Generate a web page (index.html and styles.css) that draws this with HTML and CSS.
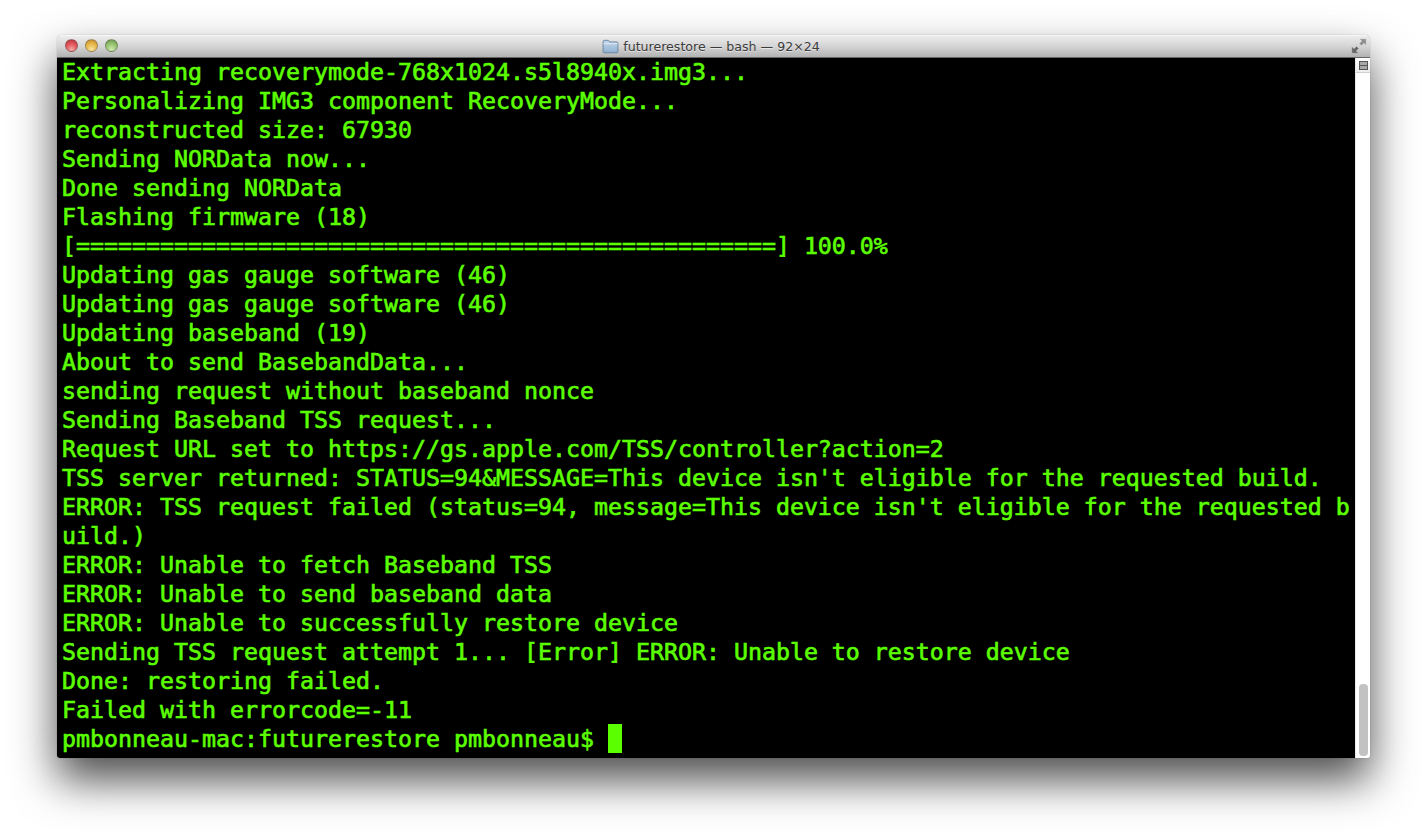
FILE: index.html
```html
<!DOCTYPE html>
<html lang="en">
<head>
<meta charset="utf-8">
<title>futurerestore — bash — 92×24</title>
<link rel="stylesheet" href="styles.css">
</head>
<body>
<main class="window">
  <header class="titlebar">
    <div class="lights">
      <span class="light red"></span>
      <span class="light yellow"></span>
      <span class="light green"></span>
    </div>
    <div class="title">
      <svg class="folder" width="17" height="15" viewBox="0 0 16 14" aria-hidden="true">
        <defs>
          <linearGradient id="fg" x1="0" y1="0" x2="0" y2="1">
            <stop offset="0" stop-color="#c4d8ea"/>
            <stop offset="1" stop-color="#8fb0d0"/>
          </linearGradient>
        </defs>
        <path d="M1 2.5C1 1.7 1.5 1.2 2.2 1.2H6l1.3 1.5H14c.6 0 1 .4 1 1v8.2c0 .6-.4 1-1 1H2c-.6 0-1-.4-1-1z" fill="url(#fg)" stroke="#5f7c9a" stroke-width=".8"/>
        <path d="M1.4 4.4H14.6" stroke="#e6eff7" stroke-width=".8"/>
      </svg>
      <span>futurerestore — bash — 92×24</span>
    </div>
    <svg class="fullscreen" width="16" height="16" viewBox="0 0 16 16" aria-hidden="true">
      <path d="M9 1H15V7L13 5L10.5 7.5L8.5 5.5L11 3z" fill="#8e8e8e" stroke="#b8b8b8" stroke-width=".5"/>
      <path d="M7 15H1V9L3 11L5.5 8.5L7.5 10.5L5 13z" fill="#666" stroke="#9a9a9a" stroke-width=".5"/>
    </svg>
  </header>
  <div class="content">
<pre class="terminal">Extracting recoverymode-768x1024.s5l8940x.img3...
Personalizing IMG3 component RecoveryMode...
reconstructed size: 67930
Sending NORData now...
Done sending NORData
Flashing firmware (18)
[==================================================] 100.0%
Updating gas gauge software (46)
Updating gas gauge software (46)
Updating baseband (19)
About to send BasebandData...
sending request without baseband nonce
Sending Baseband TSS request...
Request URL set to https://gs.apple.com/TSS/controller?action=2
TSS server returned: STATUS=94&amp;MESSAGE=This device isn't eligible for the requested build.
ERROR: TSS request failed (status=94, message=This device isn't eligible for the requested b
uild.)
ERROR: Unable to fetch Baseband TSS
ERROR: Unable to send baseband data
ERROR: Unable to successfully restore device
Sending TSS request attempt 1... [Error] ERROR: Unable to restore device
Done: restoring failed.
Failed with errorcode=-11
pmbonneau-mac:futurerestore pmbonneau$ <span class="cursor"></span></pre>
    <aside class="scrollbar">
      <div class="split"><span class="split-icon"></span></div>
      <div class="thumb"></div>
    </aside>
  </div>
</main>
</body>
</html>
```
FILE: styles.css
```css
* { box-sizing: border-box; }
html, body { margin: 0; height: 100%; background: #fff; overflow: hidden; }
body { padding: 35px 57px 79px; }

.window {
  height: 723px;
  display: flex;
  flex-direction: column;
  border-radius: 5px 5px 3px 3px;
  box-shadow: 0 22px 44px rgba(0, 0, 0, .7), 0 0 1px rgba(0, 0, 0, .5);
  overflow: hidden;
}

.titlebar {
  height: 23px;
  flex: none;
  position: relative;
  display: flex;
  align-items: center;
  justify-content: center;
  background: linear-gradient(#ececec, #d4d4d4 50%, #b2b2b2);
  border-top: 1px solid #f6f6f6;
  border-bottom: 1px solid #666;
}

.lights {
  position: absolute;
  left: 8px;
  top: 3px;
  display: flex;
  gap: 7px;
}
.light {
  width: 13px;
  height: 13px;
  border-radius: 50%;
  border: 1px solid rgba(90, 90, 90, .5);
}
.red { background: radial-gradient(circle at 50% 85%, #f4a8a8, #e2585c 50%, #c83a40 85%); }
.yellow { background: radial-gradient(circle at 50% 85%, #f8e4a0, #e8b84a 50%, #cf9630 85%); }
.green { background: radial-gradient(circle at 50% 85%, #cfe8ae, #98c472 50%, #74a452 85%); }

.title {
  display: flex;
  align-items: center;
  gap: 4px;
  font: 12.6px "DejaVu Sans", sans-serif;
  color: #3c3c3c;
  text-shadow: 0 1px 0 rgba(255, 255, 255, .5);
  margin-right: 5px;
}

.fullscreen {
  position: absolute;
  right: 3px;
  top: 2px;
}

.content {
  flex: 1;
  display: flex;
  min-height: 0;
}

.terminal {
  flex: 1;
  margin: -1px 0 0;
  padding: 0 0 0 5px;
  background: #000;
  color: #5cff00;
  font: 23.25px/29px "DejaVu Sans Mono", monospace;
  -webkit-text-stroke: .65px #5cff00;
  overflow: hidden;
}

.cursor {
  display: inline-block;
  width: 14px;
  height: 29px;
  background: #5cff00;
  vertical-align: top;
}

.scrollbar {
  width: 15px;
  flex: none;
  position: relative;
  background: #fff;
  border-left: 1px solid #e8e8e8;
}

.split {
  height: 15px;
  display: flex;
  align-items: center;
  justify-content: center;
  background: linear-gradient(#fff, #ececec);
  border-bottom: 1px solid #cfcfcf;
}
.split-icon {
  width: 9px;
  height: 9px;
  background: linear-gradient(#555 0 100%) center / 100% 1px no-repeat, #a8a8a8;
  border: 1px solid #555;
}

.thumb {
  position: absolute;
  left: 3px;
  right: 2px;
  bottom: 2px;
  height: 72px;
  border-radius: 4px;
  background: #c2c2c2;
}
```
